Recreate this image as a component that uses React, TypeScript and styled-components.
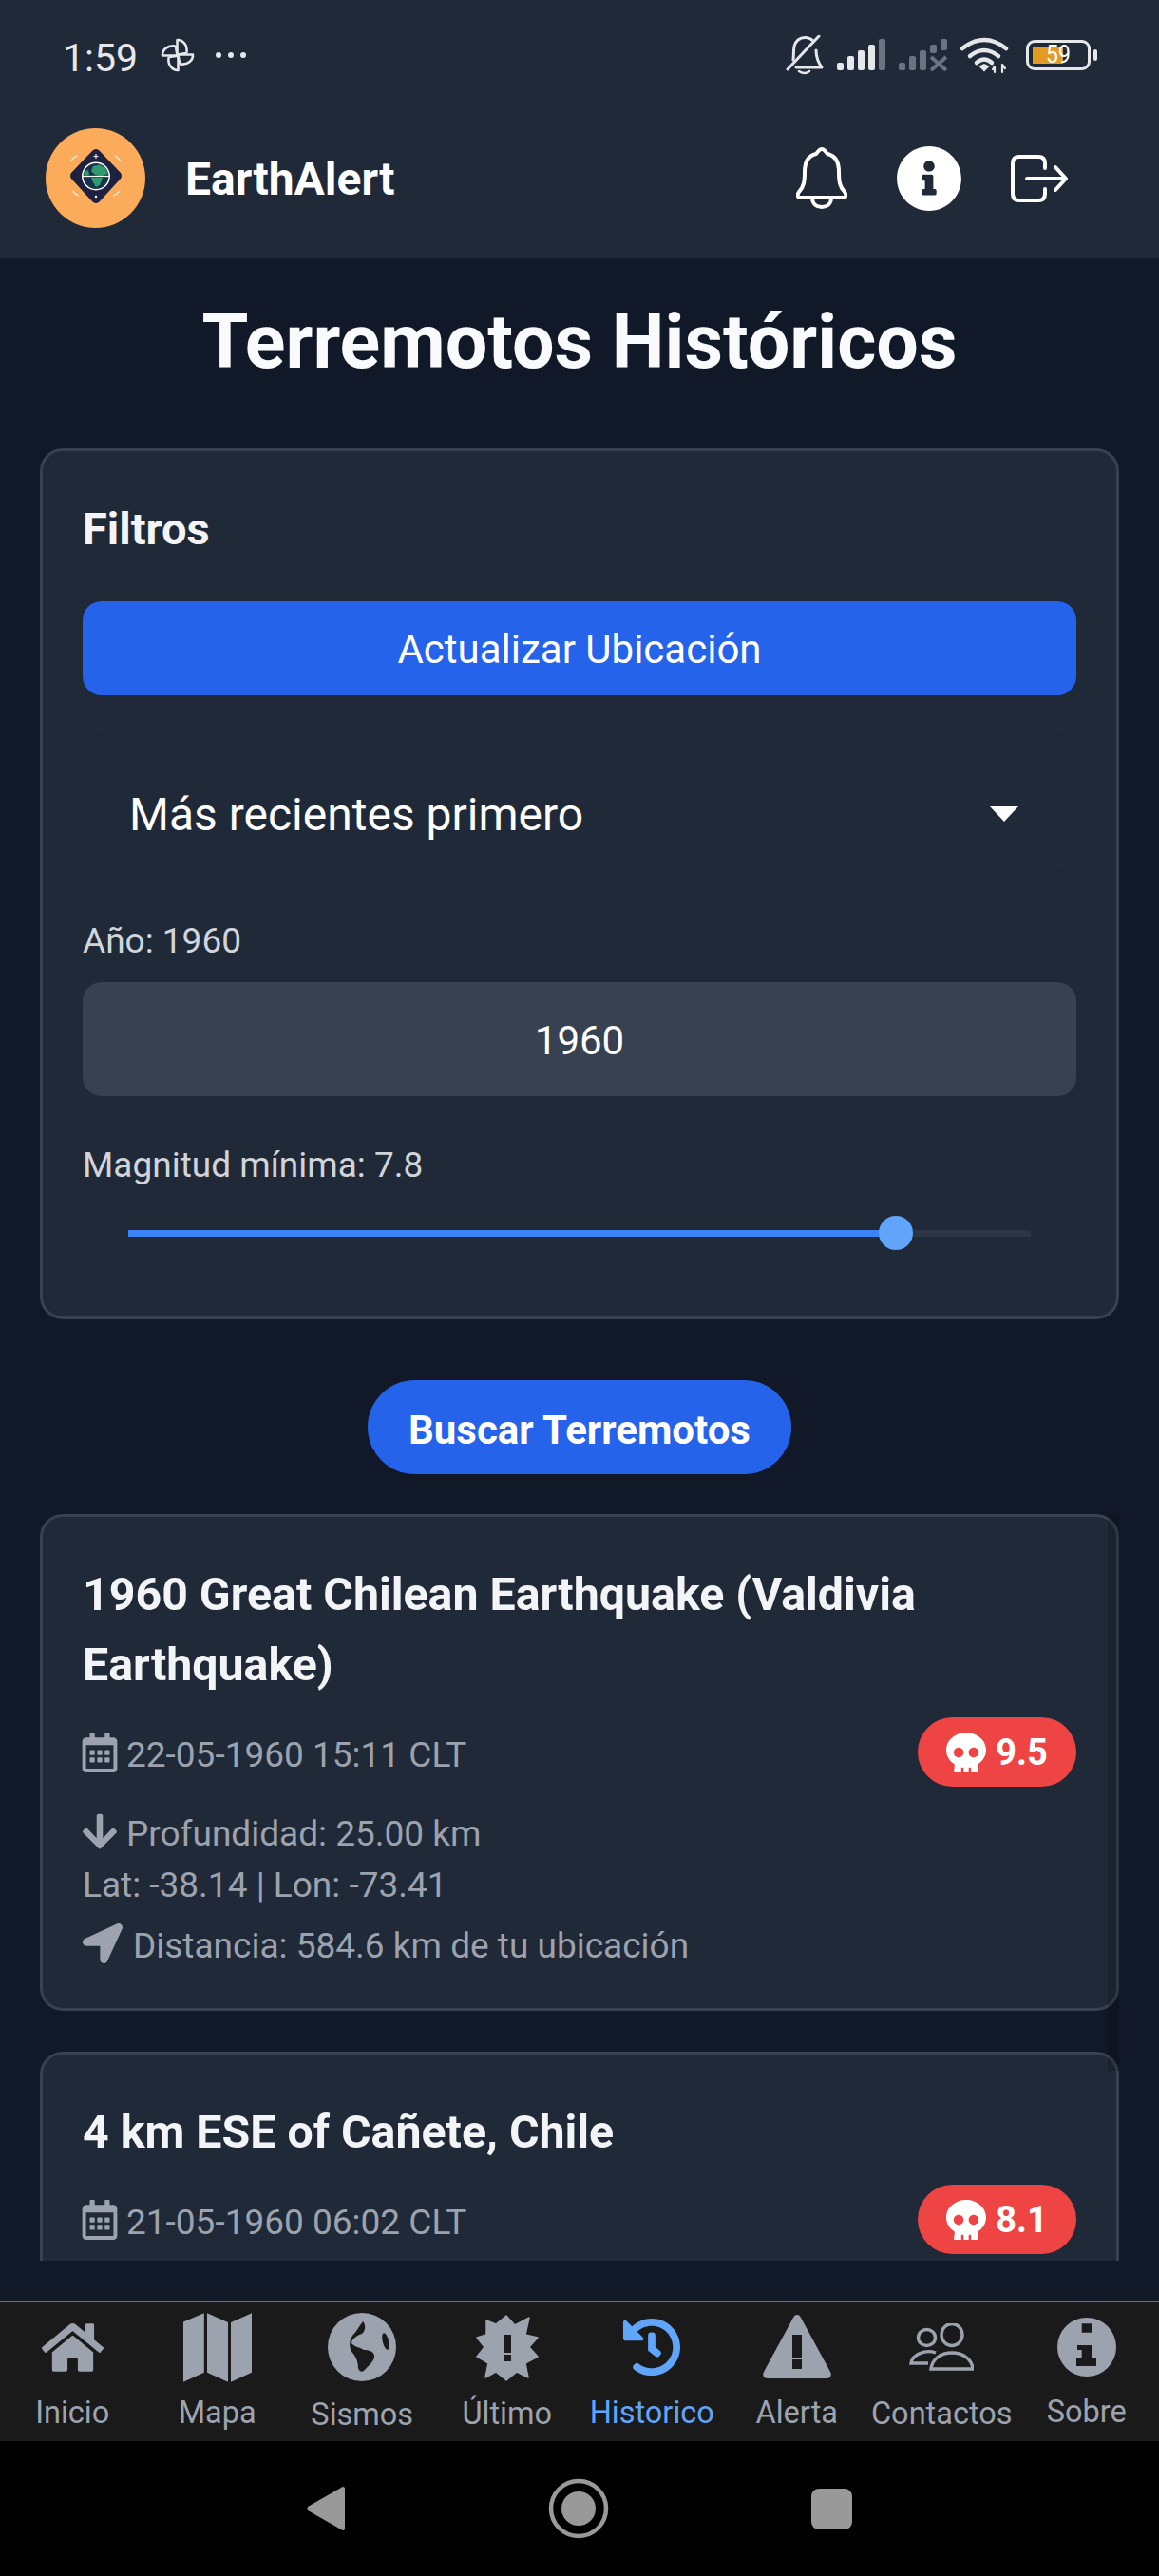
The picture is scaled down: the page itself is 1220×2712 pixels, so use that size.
import React from "react";
import styled, { createGlobalStyle } from "styled-components";
import { FaHome, FaHistory, FaInfoCircle, FaSkull, FaRegCalendarAlt, FaArrowDown, FaLocationArrow } from "react-icons/fa";

const Global = createGlobalStyle`
  html, body { margin: 0; padding: 0; background: #111827; width: 1220px; height: 2712px; overflow: hidden; }
  body { font-family: Roboto, "Liberation Sans", sans-serif; }
  * { box-sizing: border-box; }
`;

const Screen = styled.div`display:flex;flex-direction:column;width:1220px;height:2712px;background:#111827;`;
const TopBar = styled.header`background:#1f2937;height:272px;flex:none;`;
const StatusBar = styled.div`height:116px;display:flex;align-items:center;justify-content:space-between;padding:0 65px 0 66px;color:#e5e7eb;`;
const StatusGroup = styled.div`display:flex;align-items:center;`;
const Time = styled.span`font-size:41px;font-weight:400;margin:6px 24px 0 0;line-height:44px;`;
const Dots = styled.span`display:flex;gap:7px;margin-left:22px;margin-top:-1px;`;
const Dot = styled.i`display:block;width:6px;height:6px;border-radius:50%;background:#e5e7eb;`;
const Battery = styled.div`position:relative;width:68px;height:32px;border:3px solid #e5e7eb;border-radius:9px;margin-left:17px;`;
const BatteryFill = styled.div`position:absolute;left:4px;top:4px;bottom:4px;width:32px;background:#e49b26;`;
const BatteryText = styled.span`position:absolute;left:18px;top:-3px;font-size:25px;line-height:32px;color:#fff;transform:scaleX(.92);transform-origin:left center;`;
const BatteryNub = styled.div`width:4px;height:12px;background:#e5e7eb;border-radius:2px;margin-left:3px;`;
const AppHeader = styled.div`height:156px;display:flex;align-items:center;padding:0 96px 13px 48px;`;
const Logo = styled.div`width:105px;height:105px;flex:none;`;
const Brand = styled.div`margin:3px 0 0 42px;flex:1;color:#fff;font-weight:700;font-size:48px;line-height:56px;`;
const HeaderIcons = styled.div`display:flex;align-items:center;gap:51px;color:#fff;`;

const Content = styled.main`flex:1 1 0;min-height:0;padding-bottom:42px;display:flex;`;
const Scroller = styled.div`position:relative;flex:1;overflow:hidden;padding:43px 42px 0;`;
const Title = styled.h1`margin:0 0 67px;text-align:center;color:#f9fafb;font-size:79px;line-height:90px;font-weight:700;`;
const Card = styled.section`background:#1f2937;border:3px solid #374151;border-radius:24px;padding:45px 42px 45px;`;
const FilterCard = styled(Card)`padding:52px 42px 37px;`;
const FilterHeading = styled.h2`margin:0 0 46px;color:#f3f4f6;font-size:47px;line-height:60px;font-weight:700;`;
const PrimaryButton = styled.div`height:99px;padding-top:2px;border-radius:20px;background:#2563eb;color:#fff;display:flex;align-items:center;justify-content:center;font-size:42px;`;
const SelectBox = styled.div`margin-top:41px;height:145px;border:1px solid #1d2633;border-radius:20px;display:flex;align-items:center;justify-content:space-between;padding:24px 56px 0 48px;color:#fff;font-size:48px;`;
const Caret = styled.i`display:block;width:0;height:0;border-left:15px solid transparent;border-right:15px solid transparent;border-top:16px solid #fff;margin:-2px 4px 0 0;`;
const FieldLabel = styled.div<{ $mt: number }>`margin-top:${(p) => p.$mt}px;color:#d1d5db;font-size:37px;line-height:40px;`;
const YearInput = styled.div`margin-top:23px;height:120px;padding-top:2px;background:#374151;border-radius:20px;display:flex;align-items:center;justify-content:center;color:#fff;font-size:42px;`;
const Slider = styled.div`height:102px;padding:0 48px;display:flex;align-items:center;`;
const Track = styled.div`position:relative;flex:1;height:7px;background:#2b3544;`;
const TrackFill = styled.div`height:100%;background:#3b82f6;`;
const Thumb = styled.div`position:absolute;top:50%;width:36px;height:36px;border-radius:50%;background:#60a5fa;transform:translate(-50%,-50%);`;
const SearchRow = styled.div`display:flex;justify-content:center;margin:64px 0 42px;`;
const SearchButton = styled.div`width:446px;height:99px;padding-top:6px;border-radius:50px;background:#2563eb;color:#fff;display:flex;align-items:center;justify-content:center;font-size:42px;font-weight:700;`;
const QuakeCard = styled(Card)`margin-bottom:43px;`;
const QuakeTitle = styled.h3`margin:0;color:#f3f4f6;font-size:48.3px;line-height:74px;font-weight:700;`;
const DateRow = styled.div`margin-top:18px;display:flex;align-items:center;justify-content:space-between;`;
const Meta = styled.div<{ $gap?: number; $mt?: number }>`display:flex;align-items:center;gap:${(p) => p.$gap ?? 7}px;color:#9ca3af;font-size:37px;line-height:40px;margin-top:${(p) => p.$mt ?? 0}px;`;
const MetaText = styled.span`margin-top:6px;`;
const CalendarGlyph = styled(FaRegCalendarAlt)`margin-left:-3px;`;
const ArrowGlyph = styled(FaArrowDown)`margin-left:-3px;`;
const Badge = styled.div`width:167px;height:73px;border-radius:37px;background:#ef4444;color:#fff;font-weight:700;font-size:38px;display:flex;align-items:center;justify-content:center;gap:10px;`;
const ScrollThumb = styled.div`position:absolute;right:42px;top:1322px;width:12px;height:586px;background:rgba(0,0,0,.15);`;

const TabBar = styled.nav`height:148px;flex:none;background:#1a1a1a;border-top:2px solid #6f6f6f;display:grid;grid-template-columns:repeat(8,1fr);`;
const Tab = styled.div<{ $active?: boolean }>`display:flex;flex-direction:column;align-items:center;color:${(p) => (p.$active ? "#60a5fa" : "#9ca3af")};`;
const TabIcon = styled.div`height:94px;display:flex;align-items:center;justify-content:center;`;
const TabLabel = styled.span<{ $dy?: number }>`font-size:32.5px;line-height:40px;margin-top:${(p) => p.$dy ?? 2}px;`;
const NavBar = styled.div`height:142px;flex:none;background:#000;display:flex;align-items:center;justify-content:center;`;
const NavSlots = styled.div`width:574px;display:flex;align-items:center;justify-content:space-between;`;
const BackShape = styled.svg`display:block;`;
const SquareKey = styled.div`width:43px;height:43px;border-radius:8px;background:#999;`;

const LogoArt = () => (
  <svg width="105" height="105" viewBox="0 0 105 105">
    <circle cx="52.5" cy="52.5" r="52.5" fill="#fbab59" />
    <path d="M53 22 Q55 22 57 24 L79 47 Q81 50 79 53 L57 77 Q53 81 49 77 L27 53 Q25 50 27 47 L49 24 Q51 22 53 22Z" fill="#1e2140" />
    <circle cx="53" cy="50.5" r="14.2" fill="#17324a" stroke="#fff" strokeWidth="1.5" />
    <path d="M50 40 L57 38.5 L63 42 L66 48 L58 50 L52 49 L48 45Z M48 52 L60 52 L57 60 L53 62 L50 57Z M40 46 L45 44 L46 49 L41 50Z" fill="#2f9a6d" />
    <path d="M38.5 50.5 H67.5" stroke="#fff" strokeWidth="1.3" />
    <path d="M27 34 Q29 31 33 29 M73 29 Q77 31 79 35 M29 66 Q31 70 35 71 M71 71 Q75 70 78 66" stroke="#fff" strokeWidth="1.1" fill="none" />
    <path d="M53 27 V32 M50.5 29.5 H55.5" stroke="#fff" strokeWidth="1.1" /><circle cx="53" cy="72" r="1.2" fill="#fff" />
  </svg>
);

const Fan = () => (
  <svg width="36" height="36" viewBox="0 0 36 36" fill="none" stroke="#e5e7eb" strokeWidth="2.6" strokeLinejoin="round">
    {[0, 90, 180, 270].map((r) => (
      <path key={r} transform={`rotate(${r} 18 18)`} d="M17.5 18 V2 C23 1.5 28.5 7 27.5 15 C27 17 21 16 17.5 18Z" />
    ))}
  </svg>
);
const BellOff = () => (
  <svg width="40" height="42" viewBox="0 0 40 42" fill="none" stroke="#e5e7eb" strokeWidth="3" strokeLinecap="round" strokeLinejoin="round" style={{ marginRight: 14 }}>
    <path d="M8 26 C9 18 7 10 13 5 C18 1 25 2 29 6 M32 16 C32 22 33 27 38 34 H11" />
    <path d="M2 36 L35 1" />
    <path d="M14 38 Q20 42 25 38" strokeWidth="2.5" />
  </svg>
);
const Bars = ({ dim, cross }: { dim: boolean; cross?: boolean }) => {
  const h = [8, 15, 21, 27, 33];
  return (
    <svg width="52" height="34" viewBox="0 0 52 34" style={{ marginRight: 13 }}>
      {h.map((v, i) => {
        const short = cross && i === 4 ? 12 : cross && i === 3 ? 9 : 0;
        return <rect key={i} x={i * 11} y={33 - v} width="7" height={short ? short : v} rx="2" fill={dim || i === 4 ? "#6b7280" : "#e5e7eb"} />;
      })}
      {cross && <path d="M34 19 L50 33 M50 19 L34 33" stroke="#6b7280" strokeWidth="4" />}
    </svg>
  );
};
const Wifi = () => (
  <svg width="52" height="40" viewBox="0 0 52 40" fill="none" stroke="#e5e7eb" strokeWidth="4.5" strokeLinecap="round">
    <path d="M2 13 Q25 -5 48 13" /><path d="M10 21 Q25 9 40 21" /><path d="M17 28 Q25 21 33 28" />
    <path d="M21 32 L25 36 L29 32 L25 30Z" fill="#e5e7eb" strokeWidth="2" />
    <path d="M36 33 V38 M34 35 L36 32 M44 30 V38 M44 30 L47 34" strokeWidth="2.2" />
  </svg>
);
const BellIcon = () => (
  <svg width="54" height="66" viewBox="0 0 54 66" fill="none" stroke="#fff" strokeWidth="4" strokeLinecap="round" strokeLinejoin="round">
    <path d="M27 2 C30 2 31 5 33 7 C42 9 45 17 45 26 C45 36 46 42 51 47 C53 50 53 53 49 53 H5 C1 53 1 50 3 47 C8 42 9 36 9 26 C9 17 12 9 21 7 C23 5 24 2 27 2Z" />
    <path d="M17 53 C17 60 22 63 27 63 C32 63 37 60 37 53" />
  </svg>
);
const LogoutIcon = () => (
  <svg width="60" height="50" viewBox="0 0 60 50" fill="none" stroke="#fff" strokeWidth="4" strokeLinecap="round" strokeLinejoin="round">
    <path d="M36 14 V9 C36 4 33 2 29 2 H9 C5 2 2 4 2 9 V41 C2 46 5 48 9 48 H29 C33 48 36 46 36 41 V36" />
    <path d="M17 25 H57 M47 13 L58 25 L47 37" />
  </svg>
);
const MapIcon = () => (
  <svg width="72" height="73" viewBox="0 0 72 73" fill="currentColor">
    <path d="M0 9.5 L21.8 .3 V62.7 L0 72.7Z" /><path d="M25 .3 L47 10 V72.7 L25 62.7Z" /><path d="M50 10 L72 .3 V62.7 L50 72.7Z" />
  </svg>
);
const GlobeIcon = () => (
  <svg width="72" height="72" viewBox="0 0 72 72">
    <circle cx="36" cy="36" r="36" fill="currentColor" />
    <path d="M37 9 C41 13 39 20 36 22 C30 24 25 28 25 32 C28 36 34 36 38 39 C44 39 50 41 49 47 C48 52 42 56 39 60 C36 63 33 62 32 58 C32 52 30 47 27 43 C22 38 22 30 26 24 C30 20 33 14 37 9Z" fill="#1a1a1a" />
    <ellipse cx="61" cy="30" rx="3.2" ry="9" transform="rotate(-14 61 30)" fill="#1a1a1a" />
  </svg>
);
const BurstIcon = () => (
  <svg width="66" height="71" viewBox="0 0 66 71">
    <polygon
      points="32,2 41,12 56,4 52,22 65,25 56,35 65,45 52,52 55,67 43,61 32,70 21,61 10,67 13,52 1,45 9,35 1,25 11,22 11,7 21,11"
      fill="currentColor" stroke="currentColor" strokeWidth="1.5" strokeLinejoin="round"
    />
    <rect x="30" y="22" width="7" height="19" fill="#1a1a1a" /><rect x="30" y="43" width="7" height="7" fill="#1a1a1a" />
  </svg>
);
const TriangleIcon = () => (
  <svg width="72" height="68" viewBox="0 0 72 68">
    <path d="M36 0 C38 0 39 1 40 3 L71 60 C73 64 71 67 67 67 H5 C1 67 -1 64 1 60 L32 3 C33 1 34 0 36 0Z" fill="currentColor" />
    <rect x="31" y="21" width="10" height="24" fill="#1a1a1a" /><rect x="31" y="47" width="10" height="10" fill="#1a1a1a" />
  </svg>
);
const PeopleIcon = () => (
  <svg width="68" height="50" viewBox="0 0 68 50" fill="none" stroke="currentColor" strokeWidth="3.4">
    <ellipse cx="18.5" cy="15" rx="9" ry="8.5" /><ellipse cx="45" cy="12" rx="11" ry="11.5" />
    <path d="M28 31 C17 27 3 33 2 42 H20" /><path d="M23 48 C24 38 33 31 45 31 C57 31 66 38 67 48Z" />
  </svg>
);
const InfoDisc = () => (
  <svg width="62" height="62" viewBox="0 0 62 62">
    <circle cx="31" cy="31" r="31" fill="currentColor" />
    <path d="M25.7 6.3 H36.6 V15.7 H25.7Z M21 29 H36.6 V43 H41 V51 H20 V43 H25.7 V34 H21Z" fill="#1a1a1a" />
  </svg>
);
const HomeKey = () => (
  <svg width="64" height="64" viewBox="0 0 64 64" fill="none">
    <circle cx="32" cy="32" r="29" stroke="#999" strokeWidth="4.5" /><circle cx="32" cy="32" r="18" fill="#999" />
  </svg>
);

const tabs = [
  { label: "Inicio", icon: <FaHome size={65} /> },
  { label: "Mapa", icon: <MapIcon /> },
  { label: "Sismos", icon: <GlobeIcon />, dy: 4 },
  { label: "Último", icon: <BurstIcon />, dy: 3 },
  { label: "Historico", icon: <FaHistory size={62} />, active: true },
  { label: "Alerta", icon: <TriangleIcon /> },
  { label: "Contactos", icon: <PeopleIcon />, dy: 3 },
  { label: "Sobre", icon: <InfoDisc />, dy: 1 },
];

const SkullBadge = ({ value }: { value: string }) => (
  <Badge><FaSkull size={42} />{value}</Badge>
);

export default function App() {
  return (
    <Screen>
      <Global />
      <TopBar>
        <StatusBar>
          <StatusGroup>
            <Time>1:59</Time><Fan />
            <Dots><Dot /><Dot /><Dot /></Dots>
          </StatusGroup>
          <StatusGroup>
            <BellOff /><Bars dim={false} /><Bars dim cross /><Wifi />
            <Battery><BatteryFill /><BatteryText>59</BatteryText></Battery><BatteryNub />
          </StatusGroup>
        </StatusBar>
        <AppHeader>
          <Logo><LogoArt /></Logo>
          <Brand>EarthAlert</Brand>
          <HeaderIcons><BellIcon /><FaInfoCircle size={70} /><LogoutIcon /></HeaderIcons>
        </AppHeader>
      </TopBar>
      <Content>
        <Scroller>
          <Title>Terremotos Históricos</Title>
          <FilterCard>
            <FilterHeading>Filtros</FilterHeading>
            <PrimaryButton>Actualizar Ubicación</PrimaryButton>
            <SelectBox>Más recientes primero<Caret /></SelectBox>
            <FieldLabel $mt={53}>Año: 1960</FieldLabel>
            <YearInput>1960</YearInput>
            <FieldLabel $mt={53}>Magnitud mínima: 7.8</FieldLabel>
            <Slider>
              <Track>
                <TrackFill style={{ width: "85%" }} />
                <Thumb style={{ left: "85%" }} />
              </Track>
            </Slider>
          </FilterCard>
          <SearchRow><SearchButton>Buscar Terremotos</SearchButton></SearchRow>
          <QuakeCard>
            <QuakeTitle>1960 Great Chilean Earthquake (Valdivia Earthquake)</QuakeTitle>
            <DateRow>
              <Meta><CalendarGlyph size={42} /><MetaText>22-05-1960 15:11 CLT</MetaText></Meta>
              <SkullBadge value="9.5" />
            </DateRow>
            <Meta $mt={24}><ArrowGlyph size={42} /><MetaText>Profundidad: 25.00 km</MetaText></Meta>
            <Meta $mt={14}>Lat: -38.14 | Lon: -73.41</Meta>
            <Meta $mt={18} $gap={11}><FaLocationArrow size={42} /><MetaText>Distancia: 584.6 km de tu ubicación</MetaText></Meta>
          </QuakeCard>
          <QuakeCard>
            <QuakeTitle>4 km ESE of Cañete, Chile</QuakeTitle>
            <DateRow>
              <Meta><CalendarGlyph size={42} /><MetaText>21-05-1960 06:02 CLT</MetaText></Meta>
              <SkullBadge value="8.1" />
            </DateRow>
          </QuakeCard>
          <ScrollThumb />
        </Scroller>
      </Content>
      <TabBar>
        {tabs.map((t) => (
          <Tab key={t.label} $active={t.active}>
            <TabIcon>{t.icon}</TabIcon>
            <TabLabel $dy={t.dy}>{t.label}</TabLabel>
          </Tab>
        ))}
      </TabBar>
      <NavBar>
        <NavSlots>
          <BackShape width="40" height="48" viewBox="0 0 40 48"><path d="M38 1 Q40 1 40 3 V45 Q40 47 38 47 Q37 47 36 46 L1 26 Q0 24 1 22 L36 2 Q37 1 38 1Z" fill="#999" /></BackShape>
          <HomeKey />
          <SquareKey />
        </NavSlots>
      </NavBar>
    </Screen>
  );
}
